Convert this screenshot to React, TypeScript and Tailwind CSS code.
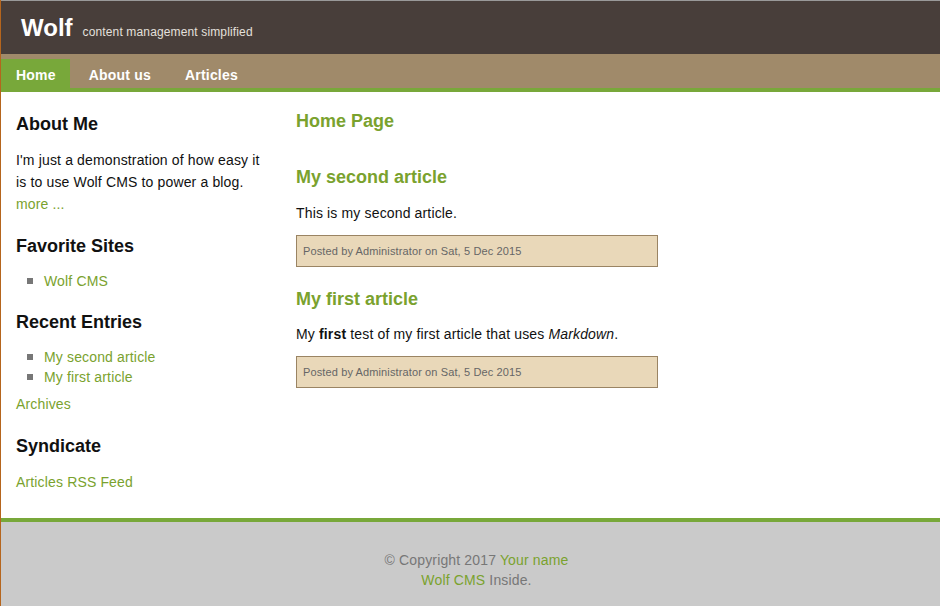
const font = { fontFamily: '"Liberation Sans", Arial, Helvetica, sans-serif' };

function Meta() {
  return (
    <div className="mt-[11px] flex h-[32px] w-[362px] items-center border border-[#9a8463] bg-[#e9d8b9] px-[6px] text-[11px] tracking-[0.12px] text-[#666]">
      Posted by Administrator on Sat, 5 Dec 2015
    </div>
  );
}

function Bullet({ children }: { children: React.ReactNode }) {
  return (
    <li className="flex h-[20px] items-center">
      <span className="ml-[11px] mr-[11px] inline-block h-[6px] w-[6px] bg-[#777]" />
      <a className="text-[#7aa22e]">{children}</a>
    </li>
  );
}

const heading = "text-[18px] font-bold leading-[24px] tracking-normal";

export default function App() {
  return (
    <div style={font} className="min-h-[606px] border-l border-[#b5651d] bg-white text-[14px] tracking-[0.15px] text-[#111]">
      <header className="border-t border-[#999] bg-[#483e3a]">
        <div className="flex h-[53px] items-baseline pl-[20px] pt-[13px]">
          <span className="text-[24px] font-bold leading-[28px] tracking-normal text-white">Wolf</span>
          <span className="ml-[10px] text-[12px] tracking-[0.14px] text-[#e4e0dc]">content management simplified</span>
        </div>
      </header>
      <nav className="flex h-[38px] items-end border-b-4 border-[#78a83a] bg-[#a08a6a] pt-[5px] text-[14px] font-bold tracking-[0.2px] text-white">
        <a className="flex h-[29px] items-center bg-[#78a83a] pl-[15px] pr-[14px] pt-[4px]">Home</a>
        <a className="ml-[3px] flex h-[29px] items-center px-4 pt-[4px]">About us</a>
        <a className="ml-[2px] flex h-[29px] items-center px-4 pt-[4px]">Articles</a>
      </nav>

      <div className="flex">
        <aside className="w-[295px] shrink-0 pl-[15px] pb-[26px]">
          <h2 className={`mt-[20px] ${heading}`}>About Me</h2>
          <p className="mt-[13px] w-[255px] leading-[22px]">
            I'm just a demonstration of how easy it is to use Wolf CMS to power a blog.{" "}
            <a className="text-[#7aa22e]">more ...</a>
          </p>

          <h2 className={`mt-[19px] ${heading}`}>Favorite Sites</h2>
          <ul className="mt-[13px]">
            <Bullet>Wolf CMS</Bullet>
          </ul>

          <h2 className={`mt-[19px] ${heading}`}>Recent Entries</h2>
          <ul className="mt-[13px]">
            <Bullet>My second article</Bullet>
            <Bullet>My first article</Bullet>
          </ul>
          <a className="mt-[7px] block leading-[20px] text-[#7aa22e]">Archives</a>

          <h2 className={`mt-[20px] ${heading}`}>Syndicate</h2>
          <a className="mt-[14px] block leading-[20px] text-[#7aa22e]">Articles RSS Feed</a>
        </aside>

        <main className="flex-1">
          <h1 className={`mt-[17px] ${heading} text-[#7aa22e]`}>Home Page</h1>

          <h2 className={`mt-[32px] ${heading} text-[#7aa22e]`}>My second article</h2>
          <p className="mt-[13px] leading-[22px]">This is my second article.</p>
          <Meta />

          <h2 className={`mt-[20px] ${heading} text-[#7aa22e]`}>My first article</h2>
          <p className="mt-[12px] leading-[22px]">
            My <strong>first</strong> test of my first article that uses <em>Markdown</em>.
          </p>
          <Meta />
        </main>
      </div>

      <footer className="h-[88px] border-t-4 border-[#78a83a] bg-[#cacaca] pl-[12px] pt-[28px] text-center leading-[20px] text-[#777]">
        <p>
          © Copyright 2017 <a className="text-[#7aa22e]">Your name</a>
        </p>
        <p>
          <a className="text-[#7aa22e]">Wolf CMS</a> Inside.
        </p>
      </footer>
    </div>
  );
}
